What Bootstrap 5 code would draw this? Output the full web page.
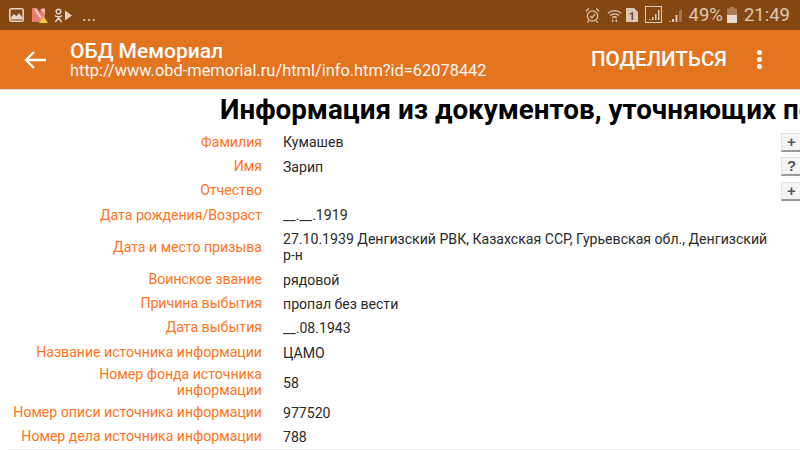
<!DOCTYPE html>
<html lang="ru"><head><meta charset="utf-8">
<link href="https://cdn.jsdelivr.net/npm/bootstrap@5.3.0/dist/css/bootstrap.min.css" rel="stylesheet">
<style>
html,body{width:800px;height:450px;overflow:hidden;background:#fff;font-family:Roboto,sans-serif}
.sbar{height:30px;background:#854711;color:#dcc8b4;font-size:18px;line-height:30px}
.sbar svg{display:block;flex:none}
.sleft{padding-left:9px}
.sright{padding-right:10px}
.abar{height:60px;background:#e37521;color:#fff;border-bottom:1px solid #d9d9d9}
.backbtn{width:70px;flex:none}
.atitle{font-size:21px;font-weight:500;line-height:22px;margin-top:10px}
.aurl{font-size:16.4px;line-height:17px;margin-top:0;opacity:.95}
.ashare{font-size:20.6px;font-weight:500;margin-right:30px}
.adots{width:6px;margin-right:37px}
.adots i{display:block;width:5px;height:5px;background:#fff;border-radius:50%;margin:2px 0}
.ptitle{font-size:27.8px;font-weight:700;line-height:32px;padding:4px 0 4.3px 220px;white-space:nowrap;color:#000;font-family:Roboto,sans-serif}
.drow{min-height:24.3px;font-size:14.1px;line-height:16px}
.dlabel{width:262px;flex:none;text-align:right;color:#ff7420;line-height:15.5px}
.dval{width:496px;flex:none;margin-left:21px;color:#2a2a2a}
.tall{height:40px}
.tall2{height:36px}
.mbtn{width:24px;height:19px;margin-left:2px;flex:none;background:#f4f4f4;border:1px solid #e2e2e2;border-bottom:2px solid #9a9a9a;color:#555;font:700 15px/16px "Liberation Sans",sans-serif;text-align:left;padding-left:5px}
.dlist{border-bottom:1px solid #eee;margin-left:8px;width:792px}
.dlist>div{margin-left:-8px}
</style></head><body>
<div class="sbar d-flex justify-content-between align-items-center">
 <div class="sleft d-flex align-items-center">
  <svg width="15" height="14" viewBox="0 0 15 14"><rect x=".8" y=".8" width="13.4" height="12.4" rx="1.5" fill="none" stroke="#e4d3c2" stroke-width="1.6"/><path d="M2 11.500V9l3-3 2.500 2 2.500-3 3 4v2.500z" fill="#e4d3c2"/></svg>
  <svg style="margin-left:7px" width="18" height="17" viewBox="0 0 18 17"><path d="M1 1l5 0 3 4 2-4h3v8l-4 6H1z" fill="#e97f6f"/><path d="M4 2l6 9" stroke="#f6d9d0" stroke-width="1.500"/><path d="M9 2l5 0v5z" fill="#f2b8a8"/><path d="M8 16l4.500-7 4.500 7z" fill="#e8c93f"/></svg>
  <svg style="margin-left:4px" width="20" height="15" viewBox="0 0 20 15"><circle cx="5.500" cy="3.500" r="2.300" fill="none" stroke="#e4d3c2" stroke-width="1.500"/><path d="M1.800 7.500c2.200 1.600 5.200 1.600 7.400 0M5.500 9.500v.5L2.300 14M5.500 10l3.200 4" fill="none" stroke="#e4d3c2" stroke-width="1.500"/><path d="M12 2.500l7 5-7 5z" fill="#e4d3c2"/></svg>
  <span style="margin-left:9px">...</span>
 </div>
 <div class="sright d-flex align-items-center">
  <svg width="15" height="17" viewBox="0 0 16 17"><circle cx="8" cy="9" r="5.500" fill="none" stroke="#dcc8b4" stroke-width="1.300"/><path d="M5.500 9l2 2 3-4M1 4l3-3M15 4l-3-3M4 14l-1.500 2M12 14l1.500 2" fill="none" stroke="#dcc8b4" stroke-width="1.300"/></svg>
  <svg style="margin-left:7px" width="15" height="17" viewBox="0 0 17 17"><path d="M1 6a11 11 0 0 1 15 0M3.500 8.500a7.500 7.500 0 0 1 10 0M6 11a3.500 3.500 0 0 1 5 0" fill="none" stroke="#dcc8b4" stroke-width="1.500"/><path d="M6.500 13v3M10.500 13v3" stroke="#dcc8b4" stroke-width="1.500"/></svg>
  <svg style="margin-left:3px" width="14" height="16" viewBox="0 0 14 16"><path d="M1 1h8l4 4v10H1z" fill="#dcc8b4"/><text x="7" y="13" font-size="11" font-weight="700" text-anchor="middle" fill="#854711" font-family="Roboto">1</text></svg>
  <svg style="margin-left:6px" width="18" height="18" viewBox="0 0 18 18"><rect x=".5" y=".5" width="16" height="16" fill="none" stroke="#dcc8b4"/><path d="M4 14v-1h1.500v1zM7 14v-3h1.500v3zM10 14V8h1.500v6zM13 14V4h1.500v10z" fill="#dcc8b4"/></svg>
  <svg style="margin-left:5px" width="15" height="15" viewBox="0 0 15 15"><path d="M1 14v-1h1.500v1zM4 14v-3h2v3zM7.500 14V7h2v7z" fill="#dcc8b4"/><path d="M11 14V3l3-2v13z" fill="#9c744f"/></svg>
  <span style="margin-left:6px;font-size:18.500px">49%</span>
  <svg style="margin-left:4px" width="10" height="16" viewBox="0 0 10 16"><path d="M3 0h4v1.500h3V16H0V1.500h3z" fill="#a97c56"/><rect y="8" width="10" height="8" fill="#e8dccf"/></svg>
  <span style="margin-left:7px;font-size:18.500px">21:49</span>
 </div>
</div>
<div class="abar d-flex align-items-center">
 <div class="backbtn d-flex justify-content-center"><svg width="24" height="20" viewBox="0 0 24 20"><path d="M23 10H3M11 2l-8 8 8 8" fill="none" stroke="#fff" stroke-width="2.400"/></svg></div>
 <div class="flex-grow-1 align-self-start"><div class="atitle">ОБД Мемориал</div><div class="aurl">http://www.obd-memorial.ru/html/info.htm?id=62078442</div></div>
 <div class="ashare">ПОДЕЛИТЬСЯ</div>
 <div class="adots"><i></i><i></i><i></i></div>
</div>
<div class="ptitle overflow-hidden">Информация из документов, уточняющих потери</div>
<div class="dlist">
 <div class="drow d-flex align-items-center"><div class="dlabel">Фамилия</div><div class="dval">Кумашев</div><div class="mbtn">+</div></div>
 <div class="drow d-flex align-items-center"><div class="dlabel">Имя</div><div class="dval">Зарип</div><div class="mbtn">?</div></div>
 <div class="drow d-flex align-items-center"><div class="dlabel">Отчество</div><div class="dval"></div><div class="mbtn">+</div></div>
 <div class="drow d-flex align-items-center"><div class="dlabel">Дата рождения/Возраст</div><div class="dval">__.__.1919</div></div>
 <div class="drow tall d-flex align-items-center"><div class="dlabel">Дата и место призыва</div><div class="dval">27.10.1939 Денгизский РВК, Казахская ССР, Гурьевская обл., Денгизский р-н</div></div>
 <div class="drow d-flex align-items-center"><div class="dlabel">Воинское звание</div><div class="dval">рядовой</div></div>
 <div class="drow d-flex align-items-center"><div class="dlabel">Причина выбытия</div><div class="dval">пропал без вести</div></div>
 <div class="drow d-flex align-items-center"><div class="dlabel">Дата выбытия</div><div class="dval">__.08.1943</div></div>
 <div class="drow d-flex align-items-center"><div class="dlabel">Название источника информации</div><div class="dval">ЦАМО</div></div>
 <div class="drow tall2 d-flex align-items-center"><div class="dlabel">Номер фонда источника<br>информации</div><div class="dval">58</div></div>
 <div class="drow d-flex align-items-center"><div class="dlabel">Номер описи источника информации</div><div class="dval">977520</div></div>
 <div class="drow d-flex align-items-center"><div class="dlabel">Номер дела источника информации</div><div class="dval">788</div></div>
</div>
<script src="https://cdn.jsdelivr.net/npm/bootstrap@5.3.0/dist/js/bootstrap.bundle.min.js"></script>
</body></html>
